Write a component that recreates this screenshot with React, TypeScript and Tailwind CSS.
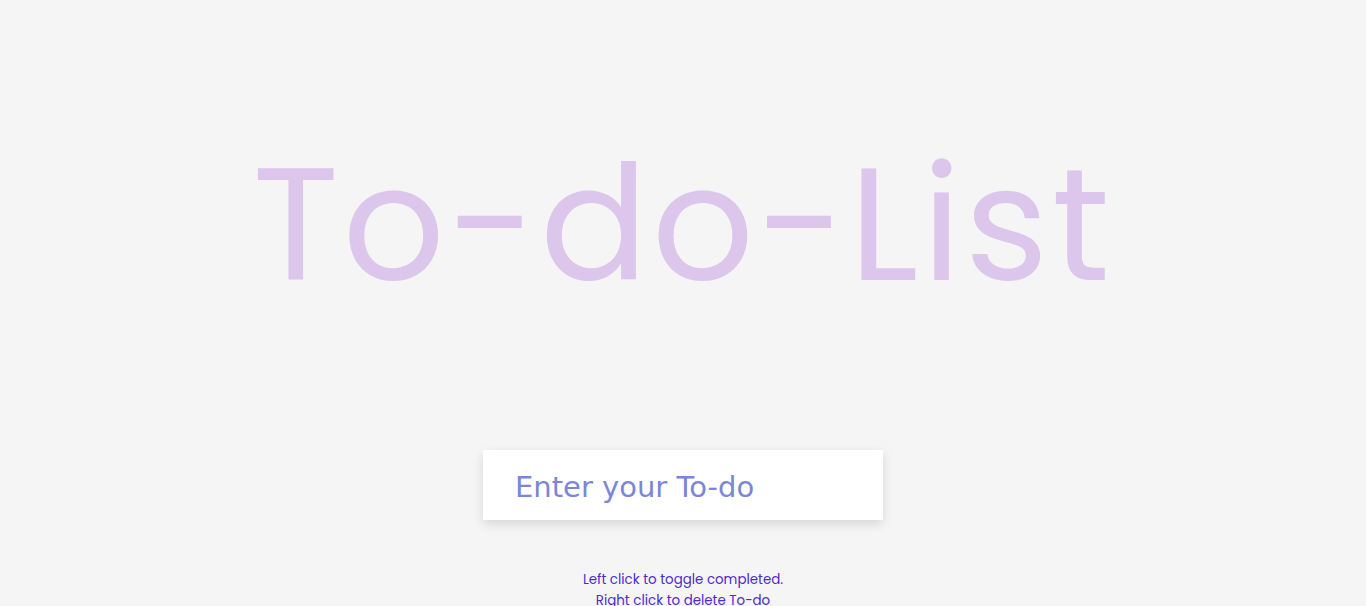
import React from 'react'

const App = () => {
  return (
    <div className="min-h-screen bg-[#f5f5f5] flex flex-col items-center font-['Poppins','Inter',sans-serif]">
      <h1 className="mt-[144px] text-[160px] leading-none font-normal tracking-[3.5px] text-[#dcc6ec] select-none">
        To-do-List
      </h1>
      <div className="mt-[146px] w-[400px] h-[70px] bg-white shadow-[0_4px_10px_rgba(0,0,0,0.12)] flex items-center px-8 pt-[5px]">
        <input
          type="text"
          placeholder="Enter your To-do"
          className="w-full outline-none bg-transparent text-[29px] font-['DejaVu_Sans',sans-serif] text-[#7b86d6] placeholder:text-[#7b86d6]"
        />
      </div>
      <div className="mt-[49px] text-center text-[13.4px] leading-[21px] text-[#4b2bd0]">
        <p>Left click to toggle completed.</p>
        <p>Right click to delete To-do</p>
      </div>
    </div>
  )
}

export default App
